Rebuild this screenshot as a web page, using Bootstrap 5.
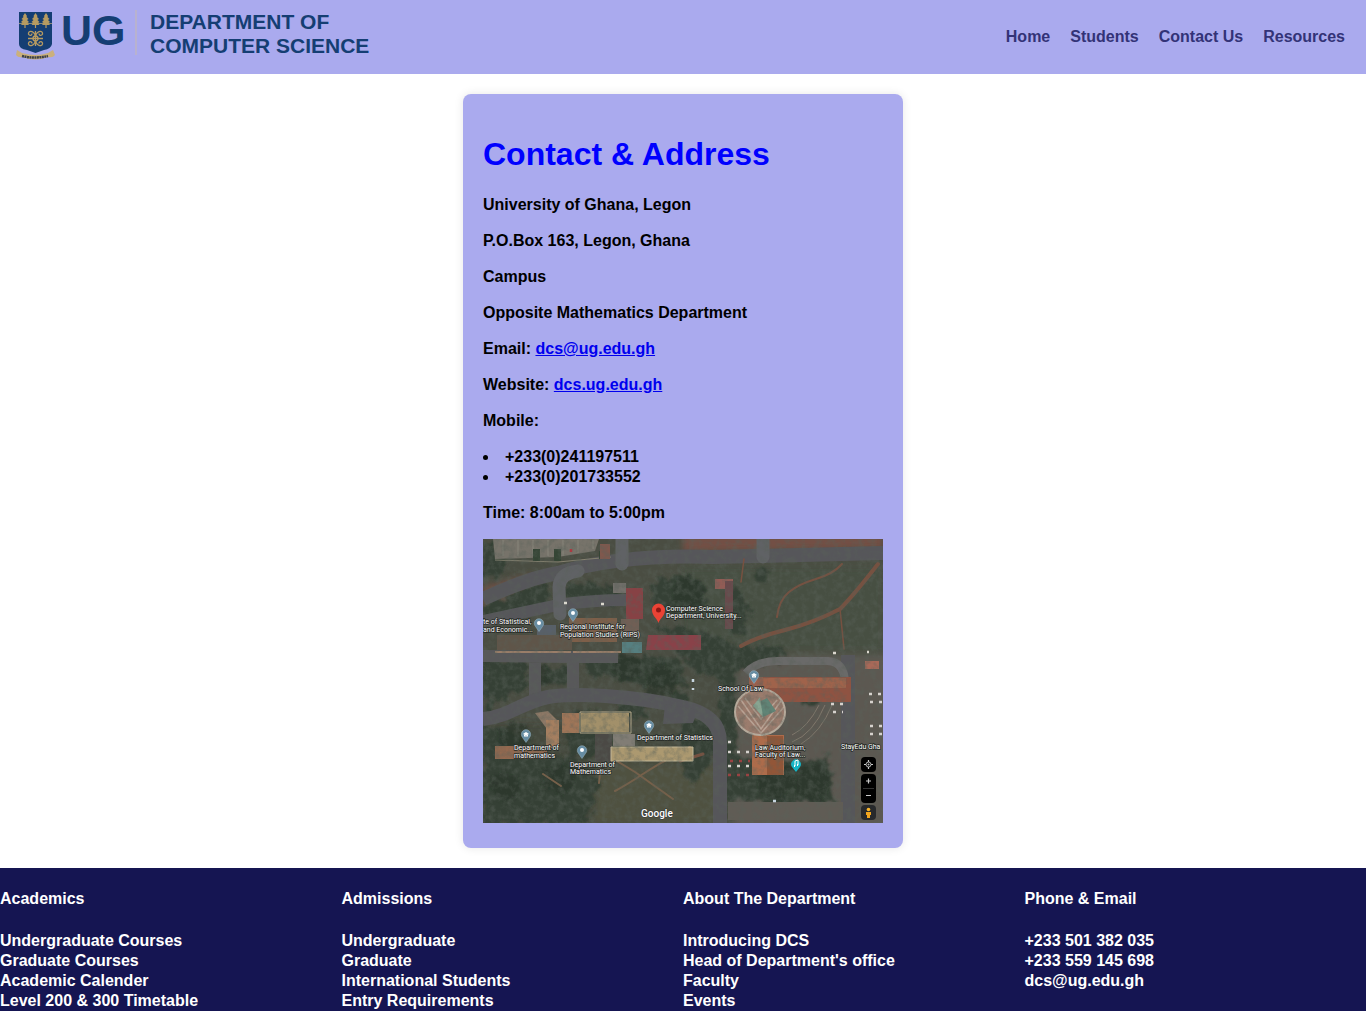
<!DOCTYPE html>
<html lang="en">
<head>
<meta charset="utf-8">
<meta name="viewport" content="width=device-width, initial-scale=1">
<title>Contact | Department of Computer Science</title>
<link href="https://cdn.jsdelivr.net/npm/bootstrap@5.3.0/dist/css/bootstrap.min.css" rel="stylesheet">
<style>
body { font-family: "Liberation Sans", Arial, sans-serif; font-size: 16px; line-height: 20px; font-weight: 700; color: #000; background: #fff; text-rendering: optimizeSpeed; }
.site-header { background: #aaaaee; height: 74px; padding: 0 21px 0 14px; }
.brand-logo { width: 364px; height: 62px; display: block; }
.site-nav { gap: 20px; }
.site-nav a { color: #333377; text-decoration: none; }
.contact-card { width: 100%; max-width: 440px; margin: 20px auto; padding: 40px 20px 25px; background: #aaaaee; border-radius: 8px; box-shadow: 0 0 10px rgba(0,0,0,.1); }
.contact-card h1 { color: #0000ff; font-size: 32px; line-height: 40px; font-weight: 700; margin-bottom: 21px; }
.contact-card p { margin-bottom: 16px; }
.contact-card a { color: #0000ee; }
.phone-list { list-style-position: inside; padding: 0; margin-bottom: 16px; }
.map-view { display: block; width: 100%; height: auto; }
.site-footer { background: #151552; color: #fff; padding-top: 21px; }
.site-footer h2 { font-size: 16px; line-height: 20px; font-weight: 700; margin-bottom: 22px; }
.site-footer a { color: #fff; text-decoration: none; }
</style>
</head>
<body>
<header class="site-header d-flex justify-content-between align-items-center">
  <a href="#" aria-label="Department of Computer Science">
  <svg class="brand-logo" viewBox="14 6 364 62" font-family="Liberation Sans, Arial, sans-serif" font-weight="700" fill="#153e73">
    <path d="M19 12H52V44Q51 49 44 50L35.500 53 27 50Q19 49 19 44Z"/>
    <path d="M19 23.500H52" stroke="#8f8a75" stroke-width="1"/>
    <g fill="#b79b61">
      <path id="tree" d="M25 13L27 16 26.500 17 28.500 19 27 20 29 22 27.500 23 29 25 25.600 25V28H24.400V25L21 25 22.500 23 21 22 23 20 21.500 19 23.500 17 23 16Z"/>
      <use href="#tree" x="10.500"/><use href="#tree" x="21"/>
    </g>
    <g fill="none" stroke="#b79b61" stroke-width="1.300">
      <path d="M35.500 31V46M28 38.500H43"/>
      <path d="M35.500 37C35 31 29 30 28.500 33S32 36 32 33.500M35.500 37C36 31 42 30 42.500 33S39 36 39 33.500M35.500 40C35 46 29 47 28.500 44S32 41 32 43.500M35.500 40C36 46 42 47 42.500 44S39 41 39 43.500"/>
      <circle cx="35.500" cy="38.500" r="2.500"/>
    </g>
    <path d="M17 50L16 55Q18 58 23 57Q35 62 48 57Q53 58 55 55L53 50 48 53Q36 57 22 53Z" fill="#cbb07c"/>
    <path d="M22 56Q35 59 48 56" fill="none" stroke="#3c4149" stroke-width="2.500" stroke-dasharray="2 .5"/>
    <text x="61" y="45" font-size="43">UG</text>
    <path d="M136 10V55" stroke="#bcb5c5" stroke-width="1.500"/>
    <text x="150" y="29" font-size="21">DEPARTMENT OF</text>
    <text x="150" y="53" font-size="21">COMPUTER SCIENCE</text>
  </svg>
  </a>
  <nav class="site-nav d-flex" aria-label="Main">
    <a href="#">Home</a><a href="#">Students</a><a href="#">Contact Us</a><a href="#">Resources</a>
  </nav>
</header>
<main>
  <section class="contact-card">
    <h1>Contact &amp; Address</h1>
    <p>University of Ghana, Legon</p>
    <p>P.O.Box 163, Legon, Ghana</p>
    <p>Campus</p>
    <p>Opposite Mathematics Department</p>
    <p>Email: <a href="mailto:dcs@ug.edu.gh">dcs@ug.edu.gh</a></p>
    <p>Website: <a href="#">dcs.ug.edu.gh</a></p>
    <p>Mobile:</p>
    <ul class="phone-list"><li>+233(0)241197511</li><li>+233(0)201733552</li></ul>
    <p>Time: 8:00am to 5:00pm</p>
    <svg class="map-view" viewBox="0 0 400 284" role="img" aria-label="Satellite map of the department" font-family="Roboto, sans-serif">
      <defs>
        <filter id="foliage" x="-5%" y="-5%" width="110%" height="110%">
          <feTurbulence type="fractalNoise" baseFrequency=".12" numOctaves="4" seed="8" result="n"/>
          <feDisplacementMap in="SourceGraphic" in2="n" scale="16" xChannelSelector="R" yChannelSelector="G"/>
          <feGaussianBlur stdDeviation="1.200"/>
        </filter>
        <filter id="grain" x="0" y="0" width="100%" height="100%">
          <feTurbulence type="fractalNoise" baseFrequency=".16" numOctaves="4" seed="3"/>
          <feColorMatrix values="0 0 0 0 .1  0 0 0 0 .12  0 0 0 0 .1  2.500 0 0 0 -1"/>
        </filter>
        <filter id="soft"><feGaussianBlur stdDeviation=".6"/></filter>
        <filter id="ground"><feGaussianBlur stdDeviation="3"/></filter>
        <g id="pin"><path d="M0 6.500L-3.500 1.500A4.700 4.700 0 1 1 3.500 1.500Z" fill="#668ca2" stroke="#9bb3bf" stroke-width=".5"/><circle cy="-2" r="2" fill="#fff"/></g>
        <g id="cap"><path d="M0 6.500L-3.500 1.500A4.700 4.700 0 1 1 3.500 1.500Z" fill="#668ca2" stroke="#9bb3bf" stroke-width=".5"/><path d="M-3-2L0-4 3-2 0-.5ZM-2-1V.5H2V-1" fill="#fff"/></g>
        <clipPath id="frame"><path d="M0 0H400V284H0Z"/></clipPath>
      </defs>
      <g clip-path="url(#frame)">
      <path d="M0 0H400V284H0Z" fill="#4a4d42"/>
      <!-- open ground -->
      <g filter="url(#ground)">
        <path d="M200 28H400V112H290L270 108 200 100Z" fill="#475042"/>
        <path d="M0 184H120L250 222V284H0Z" fill="#45493d"/>
        <path d="M115 225L235 225 240 284 110 284Z" fill="#4f5140"/>
        <path d="M256 116H410V290H250Z" fill="#5c5851"/>
        <path d="M200-5H400V10L200 13ZM0 48L50 35 35 55 0 68Z" fill="#735044"/>
      </g>
      <!-- tree cover -->
      <g filter="url(#foliage)" fill="#354035">
        <path d="M0 5H22V35L0 42ZM3 62L60 44 72 70 0 86Z"/>
        <path d="M82 48Q102 38 140 50L138 65 82 65Z"/>
        <path d="M168 48Q190 25 222 45L224 76 178 74 170 60Z"/>
        <path d="M246 55Q260 45 267 65L261 96 246 94Z"/>
        <path d="M272 31H285V45H272Z"/>
        <path d="M0 122H45L43 150 20 160 0 156Z"/>
        <path d="M60 128H88V145H60ZM100 118H195L205 148 170 148 105 136Z"/>
        <path d="M170 85L230 95 255 110 245 138 215 135 190 108Z"/>
        <path d="M83 175L113 170 115 190 140 215 85 220Z"/>
        <path d="M0 190L14 185 65 215 90 220 118 240 105 284H0Z"/>
        <path d="M250 108H300V122L250 130ZM237 128H253V264H237Z"/>
        <path d="M253 218L300 218 322 222 345 216 350 262 290 268 250 258Z"/>
        <path d="M184 152H205V168L186 170ZM0 160H10V175H0ZM197 180L230 176 232 220 210 245 197 225Z"/>
        <path d="M315 153L337 148V165H315ZM135 162H165V178H135Z"/>
      </g>
      <g filter="url(#foliage)" fill="#29352a" opacity=".7">
        <circle cx="58" cy="137" r="10"/><circle cx="145" cy="128" r="14"/><circle cx="178" cy="142" r="16"/><circle cx="205" cy="54" r="15"/><circle cx="32" cy="200" r="16"/><circle cx="76" cy="240" r="15"/><circle cx="23" cy="248" r="14"/><circle cx="293" cy="242" r="18"/><circle cx="329" cy="244" r="17"/>
      </g>
      <!-- roads and car parks -->
      <g fill="none" stroke="#56575a" stroke-linejoin="round" filter="url(#soft)">
        <path d="M0 60Q45 39 75 34Q140 15 230 18L400 14" stroke-width="14"/>
        <path d="M0 82L75 66Q110 61 143 61" stroke-width="12"/>
        <path d="M77 75L76 48Q77 34 95 32M139 0V25M280 0V18" stroke-width="13" stroke="#616265" stroke-linecap="round"/>
        <path d="M0 117L90 118 135 118M52 118V164M90 118V160" stroke-width="12" stroke="#58585a"/>
        <path d="M0 180C25 178 42 162 65 158S150 156 200 168Q237 176 237 203V284" stroke-width="14"/>
        <path d="M365 116V284" stroke-width="14"/>
        <path d="M263 134Q273 122 295 122H345Q362 123 362 145" stroke-width="8" stroke="#6b6a69"/>
        <path d="M245 272H360" stroke="#605b55" stroke-width="18"/>
        <path d="M182 165L215 171 210 184 180 185Z" fill="#56575a" stroke="none"/>
      </g>
      <g filter="url(#soft)">
        <path d="M10 0H116L112 12 75 18 12 20Z" fill="#77736a"/>
        <path d="M20 1V17M35 1V17M50 1V17M65 1V17M80 1V17M95 1V14M110 1V10" stroke="#969186" stroke-width=".6"/>
        <path d="M12 21L75 23 128 18" fill="none" stroke="#85816f"/>
        <path d="M50 10H57V22H50ZM71 10H78V22H71ZM116 12H122V20H116Z" fill="#344434"/>
        <path d="M117 5H127V20H117Z" fill="#80594d"/>
        <!-- dirt paths -->
        <g fill="none" stroke="#775141" stroke-linecap="round">
          <path d="M395 25Q370 57 357 70Q330 84 302 91T258 107" stroke-width="4"/>
          <path d="M359 25Q350 35 333 40T306 53T294 78" stroke-width="2"/>
          <path d="M357 70L361 110M261 20L258 43" stroke-width="1.500"/>
          <path d="M132 252Q145 245 160 235T207 208M119 213L152 233 190 260M119 213L116 244M60 235L78 247" stroke-width="2" stroke="#77604a"/>
          <path d="M197 222L220 215" stroke-width="3"/>
        </g>
        <!-- roofs -->
        <path d="M143 49H160V80H143Z" fill="#874344"/><path d="M130 44H143V54H130Z" fill="#74716c"/>
        <path d="M232 40H250V90H242V50H232Z" fill="#925b54"/><path d="M242 42H250V90H242Z" fill="#684a4c"/>
        <path d="M86 79H134V103H86Z" fill="#7e5f49"/><path d="M138 80H156V98H138Z" fill="#715f55"/>
        <path d="M165 96H218V111H163Z" fill="#89434a"/><path d="M139 103H159V114H139Z" fill="#577f80"/>
        <path d="M14 96H89V111H14Z" fill="#5e5448"/><path d="M54 86H73V96H54Z" fill="#59606a"/>
        <path d="M12 112H88V114H12ZM90 112H138V114H90Z" fill="#9a7e69"/>
        <path d="M272 138H368V163H272Z" fill="#8f5342"/><path d="M266 138H280V158H266Z" fill="#9b604d"/><path d="M280 139H363V149H280Z" fill="#a0644c"/>
        <path d="M382 122H396V130H382Z" fill="#a96958"/>
        <path d="M52 174L65 172 74 181V200H64V190Z" fill="#8f7966"/><path d="M63 181H76V209H63Z" fill="#a57f61"/>
        <path d="M79 174H96V194H79Z" fill="#a07659"/><path d="M98 174H146V193H98Z" fill="#a2906a"/>
        <path d="M97 173H148V194H97Z" fill="none" stroke="#bbae90" stroke-width="1"/>
        <path d="M12 207H64V220H12Z" fill="#94694f"/>
        <path d="M112 195H129V223H112Z" fill="#4c4844"/><path d="M130 195H152V207H130Z" fill="#817d75"/>
        <path d="M128 208H210V222H128Z" fill="#ac9970" stroke="#c2b798" stroke-width="1"/>
        <path d="M269 196H301V236H269Z" fill="#ad6c4c"/><path d="M284 197H300V236H284Z" fill="#925637"/>
        <!-- round hall -->
        <path d="M342 166Q330 195 309 203M349 166Q338 193 318 205M336 166Q325 188 309 196" fill="none" stroke="#81786c" stroke-width="1"/>
        <ellipse cx="277" cy="173" rx="25" ry="23" fill="#9b7b6d" stroke="#b6aa9b" stroke-width="2"/>
        <path d="M258 161L278 190 298 162M262 159L278 180 294 161M255 167L278 194 301 168" fill="none" stroke="#b9a394" stroke-width="1.500"/>
        <path d="M270 166L284 159 293 172 280 178Z" fill="#608476"/><path d="M277 158L270 167 280 178Z" fill="#88a491"/>
      </g>
      <path d="M0 0H400V284H0Z" filter="url(#grain)" opacity=".45"/>
      <!-- parked cars -->
      <g stroke-width="2.500" stroke-dasharray="3 6" filter="url(#soft)">
        <path d="M245 203H254M245 213H270M245 227H270" stroke="#d6d2cd"/><path d="M247 222H267M245 236H268" stroke="#994242"/>
        <path d="M386 155H400M387 163H400M387 187H400M387 195H400M348 165H360M350 173H360" stroke="#d6d2cd"/>
        <path d="M210 140V151M290 262H299" stroke="#c7d5df"/><path d="M88 10V18" stroke="#a93a43"/>
        <path d="M81 64H84M118 65H121M350 114H358M384 113H386" stroke="#dbd8ce"/>
      </g>
      <!-- place labels -->
      <g fill="#fff" stroke="#252925" stroke-width="1.500" paint-order="stroke" font-size="7" font-weight="400">
        <text x="0" y="85">te of Statistical,</text><text x="0" y="93">and Economic...</text>
        <text x="77" y="90">Regional Institute for</text><text x="77" y="98">Population Studies (RIPS)</text>
        <text x="183" y="72">Computer Science</text><text x="183" y="79">Department, University...</text>
        <text x="235" y="152">School Of Law</text><text x="154" y="201">Department of Statistics</text>
        <text x="31" y="211">Department of</text><text x="31" y="219">mathematics</text>
        <text x="87" y="228">Department of</text><text x="87" y="235">Mathematics</text>
        <text x="272" y="211">Law Auditorium,</text><text x="272" y="218">Faculty of Law...</text>
        <text x="358" y="210">StayEdu Gha</text>
      </g>
      <text x="158" y="278" font-size="10" font-weight="500" fill="#fff" stroke="#333" stroke-width="1" paint-order="stroke">Google</text>
      <use href="#pin" x="56" y="86"/><use href="#pin" x="90" y="76"/><use href="#pin" x="99" y="213"/>
      <use href="#cap" x="43" y="197"/><use href="#cap" x="166" y="188"/><use href="#cap" x="271" y="138"/>
      <path d="M175.500 84C174 79 169 77 169 71A6.500 6.500 0 0 1 182 71C182 77 177 79 175.500 84Z" fill="#ea4335"/><circle cx="175.500" cy="71" r="2.500" fill="#8d1714"/>
      <path d="M313 233L309 228A4.800 4.800 0 1 1 317 228Z" fill="#16b4c6"/><path d="M312 227V222L315 221V226" fill="none" stroke="#fff" stroke-width="1"/><path d="M311 227H312M314 226H315" stroke="#fff" stroke-width="2"/>
      <!-- map controls -->
      <g><rect x="378" y="218" width="15" height="15" rx="4"/><rect x="378" y="235" width="15" height="29" rx="4"/><rect x="378" y="266" width="15" height="15" rx="4" fill="#27292b"/>
      <circle cx="385.500" cy="225.500" r="2.500" fill="none" stroke="#bbb"/><circle cx="385.500" cy="225.500" r="1" fill="#bbb"/><path d="M385.500 221V223M385.500 228V230M381 225.500H383M388 225.500H390M383 242H388M385.500 239.500V244.500M383 256.500H388" stroke="#ccc" stroke-width="1.200"/><path d="M380 249.500H391" stroke="#333"/>
      <circle cx="385.500" cy="270.500" r="1.800" fill="#f7b52d"/><path d="M383 273H388V276H387V279H384V276H383Z" fill="#f2a51d"/></g>
      </g>
    </svg>
  </section>
</main>
<footer class="site-footer">
  <div class="row g-0">
    <div class="col-3"><h2>Academics</h2><ul class="list-unstyled mb-0"><li><a href="#">Undergraduate Courses</a></li><li><a href="#">Graduate Courses</a></li><li><a href="#">Academic Calender</a></li><li><a href="#">Level 200 &amp; 300 Timetable</a></li></ul></div>
    <div class="col-3"><h2>Admissions</h2><ul class="list-unstyled mb-0"><li><a href="#">Undergraduate</a></li><li><a href="#">Graduate</a></li><li><a href="#">International Students</a></li><li><a href="#">Entry Requirements</a></li></ul></div>
    <div class="col-3"><h2>About The Department</h2><ul class="list-unstyled mb-0"><li><a href="#">Introducing DCS</a></li><li><a href="#">Head of Department's office</a></li><li><a href="#">Faculty</a></li><li><a href="#">Events</a></li></ul></div>
    <div class="col-3"><h2>Phone &amp; Email</h2><ul class="list-unstyled mb-0"><li>+233 501 382 035</li><li>+233 559 145 698</li><li><a href="mailto:dcs@ug.edu.gh">dcs@ug.edu.gh</a></li></ul></div>
  </div>
</footer>
<script src="https://cdn.jsdelivr.net/npm/bootstrap@5.3.0/dist/js/bootstrap.bundle.min.js"></script>
</body>
</html>
